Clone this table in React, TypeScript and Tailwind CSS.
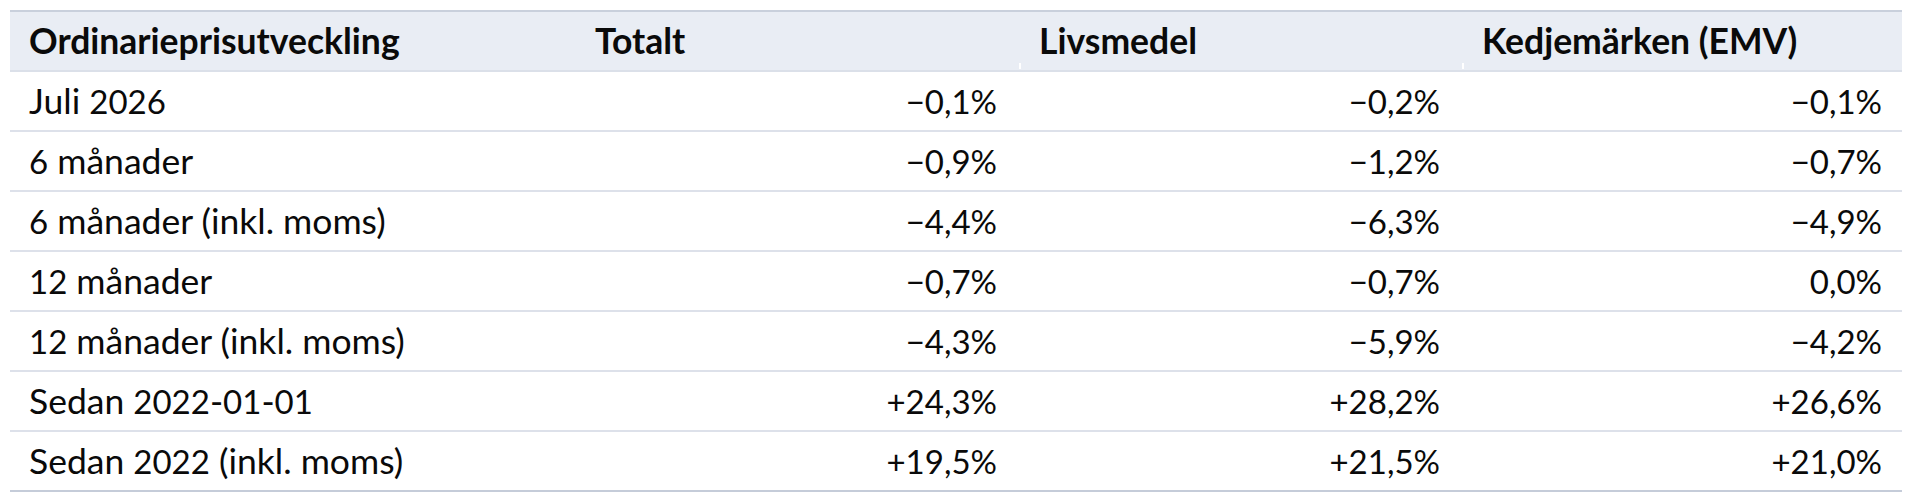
import React from "react";

const rows: [string, string, string, string][] = [
  ["Juli 2026", "−0,1%", "−0,2%", "−0,1%"],
  ["6 månader", "−0,9%", "−1,2%", "−0,7%"],
  ["6 månader (inkl. moms)", "−4,4%", "−6,3%", "−4,9%"],
  ["12 månader", "−0,7%", "−0,7%", "0,0%"],
  ["12 månader (inkl. moms)", "−4,3%", "−5,9%", "−4,2%"],
  ["Sedan 2022-01-01", "+24,3%", "+28,2%", "+26,6%"],
  ["Sedan 2022 (inkl. moms)", "+19,5%", "+21,5%", "+21,0%"],
];

function Label({ text }: { text: string }) {
  const parts = text.split(/(\d+)/);
  return (
    <>
      {parts.map((p, i) =>
        /^\d+$/.test(p) ? (
          <span key={i} className="text-[33px]">
            {p}
          </span>
        ) : (
          <span key={i} className="whitespace-pre">{p}</span>
        )
      )}
    </>
  );
}

export default function App() {
  return (
    <div
      className="w-[1914px] h-[500px] bg-white px-[10px] pt-[10px] text-[#0a0a0a]"
      style={{ fontFamily: "Lato, 'Open Sans', sans-serif" }}
    >
      <div className="w-[1892px]">
        <div className="grid grid-cols-[565px_444px_443px_440px] h-[62px] border-t-2 border-b-2 border-[#c9d0dc] bg-[#e9edf4] border-b-[#dbe0e9] font-bold text-[35.5px] leading-none">
          <div className="flex items-center pl-[19px]">Ordinarieprisutveckling</div>
          <div className="flex items-center pl-[20px]">Totalt</div>
          <div className="relative flex items-center pl-[20px]">
            <span className="absolute left-0 bottom-[1px] h-[6px] w-[2px] bg-white" />
            Livsmedel
          </div>
          <div className="relative flex items-center pl-[20px]">
            <span className="absolute left-0 bottom-[1px] h-[6px] w-[2px] bg-white" />
            Kedjemärken (EMV)
          </div>
        </div>
        {rows.map((r, i) => (
          <div
            key={i}
            className={`grid grid-cols-[565px_444px_443px_440px] h-[60px] border-b-2 text-[33px] leading-none ${
              i === rows.length - 1 ? "border-[#c5ccd9]" : "border-[#dde1ea]"
            }`}
          >
            <div className="flex items-baseline self-center pl-[19px] text-[35.5px]">
              <Label text={r[0]} />
            </div>
            <div className="flex items-center justify-end pr-[22px]">{r[1]}</div>
            <div className="flex items-center justify-end pr-[22px]">{r[2]}</div>
            <div className="flex items-center justify-end pr-[20px]">{r[3]}</div>
          </div>
        ))}
      </div>
    </div>
  );
}
